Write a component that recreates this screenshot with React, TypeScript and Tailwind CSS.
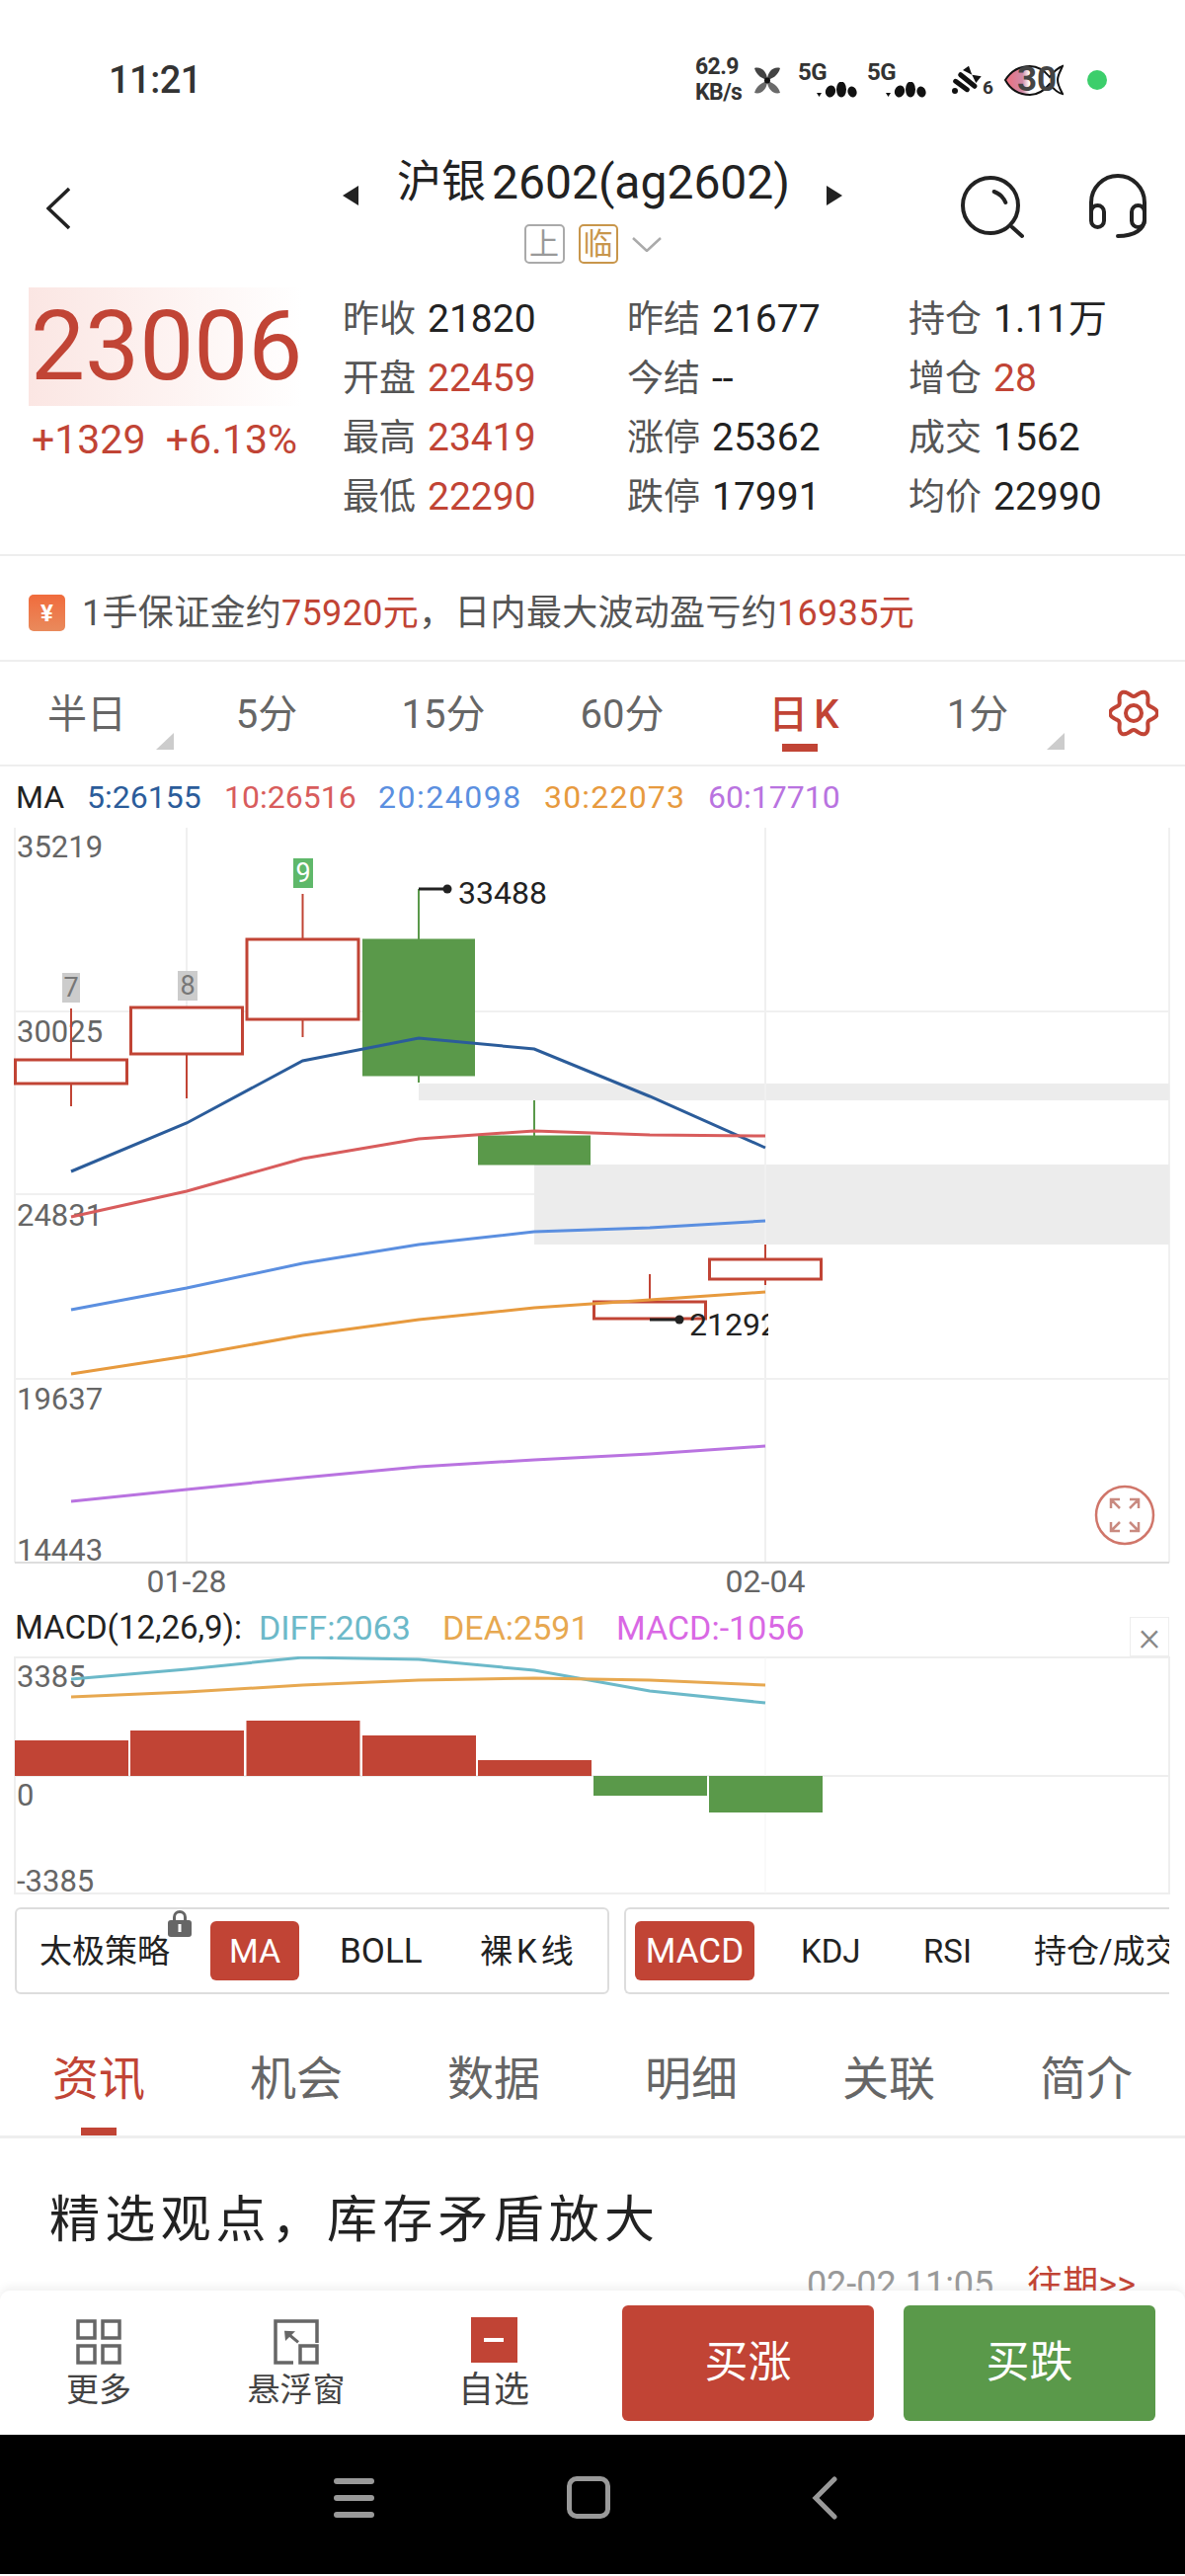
import { useId } from "react"

const RED = "#c14435"
const GREEN = "#5a994a"
const XS = [72, 189, 306.5, 424, 541, 658, 775]

function pts(ys: number[]) {
  return ys.map((y, i) => `${XS[i]},${y}`).join(" ")
}

// six lobed outline of the settings gear
const gearOutline = Array.from({ length: 120 }, (_, i) => {
  const a = (i / 120) * Math.PI * 2
  const r = 20.5 + 3.5 * Math.cos(6 * a)
  return `${(25 + r * Math.cos(a)).toFixed(2)},${(24 + r * Math.sin(a)).toFixed(2)}`
}).join(" ")

const maLines = [
  { color: "#2b5c9a", ys: [1186, 1137, 1074, 1051, 1062, 1110, 1162] },
  { color: "#d85c5c", ys: [1232, 1206, 1173, 1153, 1145, 1149, 1150] },
  { color: "#5b8fe0", ys: [1326, 1304, 1279, 1260, 1247, 1243, 1236] },
  { color: "#e79a3e", ys: [1391, 1373, 1352, 1336, 1324, 1316, 1308] },
  { color: "#b973e0", ys: [1520, 1508, 1496, 1485, 1478, 1472, 1464] },
]

const candles = [
  { x: 72, top: 1073, bottom: 1097, hi: 1021, lo: 1120, up: true },
  { x: 189, top: 1020, bottom: 1067, hi: 1020, lo: 1112, up: true },
  { x: 306.5, top: 951, bottom: 1032, hi: 905, lo: 1050, up: true },
  { x: 424, top: 951, bottom: 1089, hi: 900, lo: 1096, up: false },
  { x: 541, top: 1150, bottom: 1179, hi: 1114, lo: 1179, up: false },
  { x: 658, top: 1318, bottom: 1335, hi: 1290, lo: 1335, up: true },
  { x: 775, top: 1275, bottom: 1295, hi: 1260, lo: 1301, up: true },
]

function MainChart() {
  const clip = useId()
  return (
    <svg className="block" width={1200} height={782} viewBox="0 838 1200 782">
      <defs>
        <clipPath id={clip}>
          <rect x={0} y={838} width={778} height={782} />
        </clipPath>
      </defs>
      {/* grid */}
      <g stroke="#f0f0f0" strokeWidth={2}>
        <line x1={15} y1={1024} x2={1184} y2={1024} />
        <line x1={15} y1={1209} x2={1184} y2={1209} />
        <line x1={15} y1={1396} x2={1184} y2={1396} />
        <line x1={189} y1={838} x2={189} y2={1582} />
        <line x1={775} y1={838} x2={775} y2={1582} />
        <line x1={15} y1={838} x2={15} y2={1582} />
        <line x1={1184} y1={838} x2={1184} y2={1582} />
      </g>
      <line x1={15} y1={1582} x2={1184} y2={1582} stroke="#dddddd" strokeWidth={2} />
      {/* gap bands */}
      <rect x={424} y={1097} width={760} height={17} fill="#ececec" />
      <rect x={541} y={1179} width={643} height={81} fill="#ececec" />
      <line x1={775} y1={1097} x2={775} y2={1260} stroke="#f5f5f5" strokeWidth={1} />

      <g fill="#666666" fontSize={31}>
        <text x={17} y={868}>35219</text>
        <text x={17} y={1055}>30025</text>
        <text x={17} y={1241}>24831</text>
        <text x={17} y={1427}>19637</text>
        <text x={17} y={1580}>14443</text>
      </g>
      <g fill="#666666" fontSize={32}>
        <text x={189} y={1612} textAnchor="middle">01-28</text>
        <text x={775} y={1612} textAnchor="middle">02-04</text>
      </g>

      {candles.map((c) => (
        <g key={c.x}>
          <line x1={c.x} y1={c.hi} x2={c.x} y2={c.lo} stroke={c.up ? RED : GREEN} strokeWidth={2} />
          <rect
            x={c.x - 56.5}
            y={c.top}
            width={113}
            height={c.bottom - c.top}
            fill={c.up ? "#ffffff" : GREEN}
            stroke={c.up ? RED : GREEN}
            strokeWidth={c.up ? 3 : 1}
          />
        </g>
      ))}

      {maLines.map((l) => (
        <polyline key={l.color} points={pts(l.ys)} fill="none" stroke={l.color} strokeWidth={3} />
      ))}

      {/* TD counts */}
      <rect x={63} y={985} width={18} height={30} fill="#cccccc" />
      <text x={72} y={1009} textAnchor="middle" fontSize={27} fill="#777777">7</text>
      <rect x={180} y={983} width={20} height={30} fill="#cccccc" />
      <text x={190} y={1007} textAnchor="middle" fontSize={27} fill="#777777">8</text>
      <rect x={297} y={869} width={20} height={30} fill="#5fb86a" />
      <text x={307} y={893} textAnchor="middle" fontSize={27} fill="#ffffff">9</text>

      {/* high / low markers */}
      <path d="M424 900H453" stroke="#222222" strokeWidth={3} />
      <circle cx={453} cy={900} r={4.5} fill="#222222" />
      <text x={464} y={915} fontSize={32} fill="#222222">33488</text>
      <path d="M658 1336H688" stroke="#222222" strokeWidth={3} />
      <circle cx={688} cy={1336} r={4.5} fill="#222222" />
      <text x={698} y={1352} fontSize={32} fill="#222222" clipPath={`url(#${clip})`}>21292</text>

      {/* fullscreen button */}
      <g fill="none" stroke="#d0766a" strokeWidth={2.5}>
        <circle cx={1139} cy={1534} r={29} />
        <path d="M1125 1527v-9h9M1125 1518l9 9M1153 1527v-9h-9M1153 1518l-9 9M1125 1541v9h9M1125 1550l9-9M1153 1541v9h-9M1153 1550l-9-9" stroke="#c98a80" />
      </g>
    </svg>
  )
}

function MacdChart() {
  const bars = [
    { x: 72, top: 1762 },
    { x: 189, top: 1752 },
    { x: 306.5, top: 1742 },
    { x: 424, top: 1757 },
    { x: 541, top: 1782 },
  ]
  return (
    <svg className="block" width={1200} height={242} viewBox="0 1677 1200 242">
      <g stroke="#eeeeee" strokeWidth={2} fill="none">
        <rect x={15} y={1678} width={1169} height={239} />
        <line x1={15} y1={1798} x2={1184} y2={1798} />
      </g>
      <line x1={775} y1={1678} x2={775} y2={1917} stroke="#f5f5f5" strokeWidth={1} />
      {bars.map((b) => (
        <rect key={b.x} x={b.x - 57} y={b.top} width={115} height={1798 - b.top} fill={RED} />
      ))}
      <rect x={601} y={1798} width={115} height={20} fill={GREEN} />
      <rect x={718} y={1798} width={115} height={37} fill={GREEN} />
      <g fill="#666666" fontSize={31}>
        <text x={17} y={1708}>3385</text>
        <text x={17} y={1828}>0</text>
        <text x={17} y={1915}>-3385</text>
      </g>
      <polyline points={pts([1700, 1690, 1678, 1680, 1691, 1712, 1724])} fill="none" stroke="#6cb9c9" strokeWidth={3} />
      <polyline points={pts([1718, 1713, 1706, 1701, 1699, 1701, 1706])} fill="none" stroke="#e7a850" strokeWidth={3} />
    </svg>
  )
}

function SignalDots() {
  return (
    <svg width={41} height={16} viewBox="0 0 41 16" fill="#111111">
      <path d="M0 11h5l-2.5 4z" />
      <ellipse cx={14} cy={9.5} rx={5} ry={6} transform="rotate(20 14 9.5)" />
      <ellipse cx={25} cy={7.5} rx={5} ry={8} />
      <ellipse cx={36} cy={10} rx={4.5} ry={5.5} transform="rotate(-20 36 10)" />
    </svg>
  )
}

function StatusIcons() {
  return (
    <div className="flex items-center font-bold text-[#333333]">
      <div className="flex w-[60px] flex-col text-[23px] leading-[26px] tracking-tight">
        <span>62.9</span>
        <span>KB/s</span>
      </div>
      <svg width={26} height={27} viewBox="0 0 26 27" className="mr-[18px]">
        <g fill="#444444">
          <path d="M13 13C9 12 2 9 0 1c7-2 13 4 13 12z" />
          <path d="M13 13c4-1 11-4 13-12-7-2-13 4-13 12z" />
        </g>
        <g fill="#6a6a6a">
          <path d="M13 14c-4 1-11 4-13 12 7 2 13-4 13-12z" />
          <path d="M13 14c4 1 11 4 13 12-7 2-13-4-13-12z" />
        </g>
        <circle cx={13} cy={13.5} r={3} fill="#111111" />
      </svg>
      <div className="relative h-[36px] w-[70px]">
        <span className="absolute left-0 top-0 text-[24px] leading-[20px] tracking-tight">5G</span>
        <div className="absolute left-[19px] top-[20px] flex"><SignalDots /></div>
      </div>
      <div className="relative h-[36px] w-[86px]">
        <span className="absolute left-0 top-0 text-[24px] leading-[20px] tracking-tight">5G</span>
        <div className="absolute left-[19px] top-[20px] flex"><SignalDots /></div>
      </div>
      <svg width={31} height={30} viewBox="0 0 31 30" fill="#111111">
        <circle cx={3} cy={26} r={3} />
        <path d="M3.700 16.300L15.300 24.700M8.700 9.700L23 21.300" stroke="#111111" strokeWidth={5} strokeLinecap="round" />
        <path d="M11 5L17 .7l3.300 9zM20.300 9.700L29.700 11.300L24.300 18z" />
      </svg>
      <span className="mt-[16px] w-[22px] text-[19px] leading-[16px]">6</span>
      <div className="relative h-[33px] w-[60px]">
        <svg width={60} height={33} viewBox="0 0 60 33" className="block">
          <defs>
            <linearGradient id="fish" x1="0" x2="1">
              <stop offset="0" stopColor="#ef6d7a" />
              <stop offset="0.3" stopColor="#cf8aa8" />
              <stop offset="0.42" stopColor="#ffffff" />
            </linearGradient>
          </defs>
          <path d="M1 16C8 5 18 2 26 2c10 0 16 6 20 11 3-4 7-9 13-11-2 5-5 9-5 14 0 5 3 10 5 14-6-1-10-6-13-10-5 6-11 11-20 11C16 31 7 27 1 16z" fill="url(#fish)" stroke="#111111" strokeWidth={2} />
        </svg>
        <span className="absolute left-[13px] top-[-1px] text-[35px] font-bold leading-[34px] text-[#444444]">30</span>
      </div>
      <div className="ml-[24px] h-[20px] w-[20px] rounded-full bg-[#3cce6b]" />
    </div>
  )
}

function Header() {
  return (
    <div className="flex h-[123px] w-full items-start text-[#222222]">
      <svg width={24} height={44} viewBox="0 0 24 44" className="ml-[47px] mt-[27px]" fill="none" stroke="#222222" strokeWidth={3.5}>
        <path d="M23 2L2 22l21 20" />
      </svg>
      <div className="ml-[276px] flex flex-col items-center">
        <div className="flex items-center">
          <svg width={16} height={20} viewBox="0 0 16 20" className="mt-[26px]"><path d="M16 0v20L0 10z" fill="#222222" /></svg>
          <span className="ml-[39px] mr-[37px] flex items-center whitespace-nowrap leading-[46px]">
            <span className="text-[45px]">沪银</span>
            <span className="ml-[6px] text-[48px]">2602(ag2602)</span>
          </span>
          <svg width={16} height={20} viewBox="0 0 16 20" className="mt-[26px]"><path d="M0 0v20l16-10z" fill="#222222" /></svg>
        </div>
        <div className="mt-[19px] flex items-center gap-[14px]">
          <span className="flex h-[40px] w-[41px] items-center justify-center rounded-[5px] border-2 border-[#aaaaaa] text-[30px] leading-none text-[#999999]">上</span>
          <span className="flex h-[40px] w-[40px] items-center justify-center rounded-[5px] border-2 border-[#c8964b] text-[30px] leading-none text-[#c8964b]">临</span>
          <svg width={30} height={15} viewBox="0 0 30 15" fill="none" stroke="#aaaaaa" strokeWidth={2.5}><path d="M1 1l14 13L29 1" /></svg>
        </div>
      </div>
      <div className="ml-auto mr-[36px] mt-[14px] flex gap-[63px]">
        <svg width={64} height={66} viewBox="0 0 64 66" fill="none" stroke="#222222" strokeWidth={4} strokeLinecap="round">
          <circle cx={30} cy={32} r={28} />
          <path d="M52 54l10 9" />
          <path d="M33.700 18Q42 21 45.300 29" />
        </svg>
        <svg width={64} height={66} viewBox="0 0 64 66" fill="none" stroke="#222222" strokeWidth={4} strokeLinecap="round">
          <path d="M5 42V29a27 27 0 0 1 54 0v13" />
          <rect x={5} y={32} width={13} height={22} rx={6.5} />
          <rect x={46} y={32} width={13} height={22} rx={6.5} />
          <path d="M59 46c0 10-10 17-27 17" />
        </svg>
      </div>
    </div>
  )
}

const quote = [
  [
    { label: "昨收", value: "21820" },
    { label: "昨结", value: "21677" },
    { label: "持仓", value: "1.11万" },
  ],
  [
    { label: "开盘", value: "22459", red: true },
    { label: "今结", value: "--" },
    { label: "增仓", value: "28", red: true },
  ],
  [
    { label: "最高", value: "23419", red: true },
    { label: "涨停", value: "25362" },
    { label: "成交", value: "1562" },
  ],
  [
    { label: "最低", value: "22290", red: true },
    { label: "跌停", value: "17991" },
    { label: "均价", value: "22990" },
  ],
]

function Corner() {
  return (
    <svg width={18} height={17} viewBox="0 0 18 17" className="absolute bottom-[15px] right-0">
      <path d="M18 0v17H0z" fill="#cccccc" />
    </svg>
  )
}

export default function App() {
  return (
    <div className="relative h-[2608px] w-[1200px] overflow-hidden bg-white [font-family:Roboto,'Noto_Sans_CJK_SC',sans-serif]">
      {/* status bar */}
      <div className="flex h-[162px] items-center justify-between pl-[110px] pr-[79px]">
        <span className="text-[38px] font-medium leading-none tracking-[-0.5px] text-[#333333]">11:21</span>
        <StatusIcons />
      </div>

      <Header />

      {/* quote */}
      <div className="flex h-[278px] border-b-2 border-[#eeeeee] pt-[6px]">
        <div className="w-[347px] pl-[29px]">
          <div className="flex h-[120px] w-[277px] items-center bg-gradient-to-r from-[#fbe6e3] to-white pl-[2px] text-[98px] leading-none text-[#c14435]">
            23006
          </div>
          <div className="mt-[12px] flex w-[272px] justify-between pl-[3px] text-[41px] leading-[44px] text-[#c14435]">
            <span>+1329</span>
            <span>+6.13%</span>
          </div>
        </div>
        <div className="mt-[2px] grid h-[240px] flex-1 grid-cols-[288px_285px_1fr] grid-rows-4">
          {quote.flat().map((q) => (
            <div key={q.label} className="flex items-center whitespace-nowrap">
              <span className="w-[86px] text-[37px] leading-none text-[#555555]">{q.label}</span>
              <span className={q.red ? "text-[39px] leading-none text-[#c14435]" : "text-[39px] leading-none text-[#222222]"}>{q.value}</span>
            </div>
          ))}
        </div>
      </div>

      {/* margin notice */}
      <div className="flex h-[107px] items-center border-b-2 border-[#eeeeee] pl-[29px] pt-[10px]">
        <span className="flex h-[37px] w-[37px] items-center justify-center rounded-[5px] bg-gradient-to-b from-[#f06b3c] to-[#e98a5c] text-[24px] font-bold leading-none text-white">¥</span>
        <span className="ml-[17px] whitespace-nowrap text-[36px] leading-none tracking-[0.3px] text-[#555555]">
          1手保证金约<span className="text-[#c14435]">75920元</span>，日内最大波动盈亏约<span className="text-[#c14435]">16935元</span>
        </span>
      </div>

      {/* periods */}
      <div className="grid h-[106px] grid-cols-[176px_188px_170px_192px_176px_176px_1fr] items-stretch border-b-2 border-[#eeeeee] text-[40px] text-[#666666]">
        <div className="relative flex items-center justify-center pt-[3px]">半日<Corner /></div>
        <div className="flex items-center justify-center pt-[3px]">5分</div>
        <div className="flex items-center justify-center pt-[3px]">15分</div>
        <div className="flex items-center justify-center pt-[3px]">60分</div>
        <div className="relative flex items-center justify-center pt-[3px] font-medium text-[#c14435]">
          日<span className="ml-[6px]">K</span>
          <span className="absolute bottom-[13px] left-[66px] h-[8px] w-[36px] bg-[#c14435]" />
        </div>
        <div className="relative flex items-center justify-center pt-[3px]">1分<Corner /></div>
        <div className="flex items-center justify-end pr-[27px]">
          <svg width={50} height={48} viewBox="0 0 50 48" fill="none" stroke="#c14435" strokeWidth={4}>
            <polygon points={gearOutline} />
            <circle cx={25} cy={24} r={8} />
          </svg>
        </div>
      </div>

      {/* ma legend */}
      <div className="flex h-[62px] items-center whitespace-nowrap pl-[16px] text-[32px] leading-none">
        <span className="w-[72px] text-[#222222]">MA</span>
        <span className="w-[139px] text-[#2b5c9a]">5:26155</span>
        <span className="w-[156px] text-[#d85c5c]">10:26516</span>
        <span className="w-[168px] tracking-[1.5px] text-[#5b8fe0]">20:24098</span>
        <span className="w-[166px] tracking-[1.2px] text-[#e79a3e]">30:22073</span>
        <span className="text-[#b973e0]">60:17710</span>
      </div>

      <MainChart />

      {/* macd legend */}
      <div className="relative flex h-[57px] items-center whitespace-nowrap pb-[2px] pl-[15px] text-[33px] leading-none">
        <span className="w-[247px] text-[#222222]">MACD(12,26,9):</span>
        <span className="w-[186px] text-[34px] text-[#6cb9c9]">DIFF:2063</span>
        <span className="w-[176px] text-[34px] text-[#e7a850]">DEA:2591</span>
        <span className="text-[34px] text-[#d968e4]">MACD:-1056</span>
        <span className="absolute left-[1144px] top-[17px] flex h-[40px] w-[40px] items-center justify-center border border-[#eeeeee] text-[42px] font-light leading-none text-[#888888]">×</span>
      </div>

      <MacdChart />

      {/* indicators */}
      <div className="mt-[12px] flex h-[88px] overflow-hidden pl-[15px] pr-[16px] text-[33px] leading-none text-[#222222]">
        <div className="relative flex w-[602px] items-center rounded-[6px] border-2 border-[#dddddd] pl-[23px]">
          <span className="w-[173px]">太极策略</span>
          <svg width={26} height={28} viewBox="0 0 26 28" className="absolute left-[152px] top-0" fill="#666666">
            <path d="M6 12V8a7 7 0 0 1 14 0v4h-3V8a4 4 0 0 0-8 0v4z" />
            <rect x={1} y={11} width={24} height={17} rx={3} />
            <rect x={11.5} y={15} width={3} height={8} fill="#ffffff" />
          </svg>
          <span className="flex h-[60px] w-[90px] items-center justify-center rounded-[6px] bg-[#c14435] text-[34px] text-white">MA</span>
          <span className="ml-[41px] w-[142px] text-[35px]">BOLL</span>
          <span className="whitespace-nowrap">裸<span className="mx-[4px]">K</span>线</span>
        </div>
        <div className="ml-[15px] flex flex-1 items-center overflow-hidden whitespace-nowrap rounded-l-[6px] border-y-2 border-l-2 border-[#dddddd] pl-[9px]">
          <span className="flex h-[60px] w-[121px] shrink-0 items-center justify-center rounded-[6px] bg-[#c14435] text-[35px] text-white">MACD</span>
          <span className="ml-[47px] w-[124px] shrink-0">KDJ</span>
          <span className="w-[112px] shrink-0">RSI</span>
          <span className="shrink-0">持仓/成交</span>
        </div>
      </div>

      {/* news tabs */}
      <div className="mt-[21px] grid h-[125px] grid-cols-6 border-b-[3px] border-[#eeeeee] pt-[6px] text-[47px] leading-none text-[#666666]">
        <div className="relative flex items-center justify-center text-[#c14435]">
          资讯
          <span className="absolute bottom-0 left-[82px] h-[8px] w-[36px] bg-[#c14435]" />
        </div>
        <div className="flex items-center justify-center">机会</div>
        <div className="flex items-center justify-center">数据</div>
        <div className="flex items-center justify-center">明细</div>
        <div className="flex items-center justify-center">关联</div>
        <div className="flex items-center justify-center">简介</div>
      </div>

      {/* article */}
      <div className="h-[154px] overflow-hidden pl-[50px] pr-[50px]">
        <div className="mt-[57px] whitespace-nowrap text-[51px] leading-none tracking-[5.2px] text-[#222222]">精选观点，库存矛盾放大</div>
        <div className="mt-[22px] flex justify-end whitespace-nowrap text-[36px] leading-none">
          <span className="text-[#999999]">02-02 11:05</span>
          <span className="ml-[34px] text-[#c14435]">往期&gt;&gt;</span>
        </div>
      </div>

      {/* bottom toolbar */}
      <div className="flex h-[146px] items-center rounded-t-[10px] bg-white shadow-[0_-4px_8px_rgba(0,0,0,0.06)]">
        <div className="flex w-[200px] flex-col items-center text-[#444444]">
          <svg width={46} height={46} viewBox="0 0 46 46" fill="none" stroke="#666666" strokeWidth={3.5}>
            <rect x={2} y={2} width={17} height={17} />
            <rect x={27} y={2} width={17} height={17} />
            <rect x={2} y={27} width={17} height={17} />
            <rect x={27} y={27} width={17} height={17} />
          </svg>
          <span className="mt-[9px] text-[33px] leading-none">更多</span>
        </div>
        <div className="flex w-[200px] flex-col items-center text-[#444444]">
          <svg width={46} height={46} viewBox="0 0 46 46" fill="none" stroke="#666666" strokeWidth={3.5}>
            <path d="M20 44H2V2h42v22" />
            <rect x={27} y={27} width={17} height={17} />
            <path d="M11 11.700L22 12.300L12 22z" fill="#666666" stroke="none" />
            <path d="M15 15l10 8.300" strokeWidth={3} />
          </svg>
          <span className="mt-[9px] text-[33px] leading-none">悬浮窗</span>
        </div>
        <div className="flex w-[200px] flex-col items-center text-[#444444]">
          <span className="flex h-[46px] w-[47px] items-center justify-center bg-[#c14435]">
            <span className="h-[4px] w-[20px] bg-white" />
          </span>
          <span className="mt-[10px] text-[36px] leading-none">自选</span>
        </div>
        <button className="ml-[30px] flex h-[117px] w-[255px] items-center justify-center rounded-[6px] bg-[#c14435] text-[44px] leading-none text-white">买涨</button>
        <button className="ml-[30px] flex h-[117px] w-[255px] items-center justify-center rounded-[6px] bg-[#5a994a] text-[44px] leading-none text-white">买跌</button>
      </div>

      {/* android nav */}
      <div className="flex h-[141px] items-center bg-black pb-[14px] pl-[338px]">
        <div className="flex h-[40px] w-[41px] flex-col justify-between">
          <span className="h-[6px] rounded-full bg-[#999999]" />
          <span className="h-[6px] rounded-full bg-[#999999]" />
          <span className="h-[6px] rounded-full bg-[#999999]" />
        </div>
        <div className="ml-[195px] h-[43px] w-[44px] rounded-[10px] border-[5px] border-[#999999]" />
        <svg width={26} height={44} viewBox="0 0 26 44" fill="none" stroke="#999999" strokeWidth={5} strokeLinecap="round" className="ml-[204px]">
          <path d="M23 3L4 22l19 19" />
        </svg>
      </div>
    </div>
  )
}
